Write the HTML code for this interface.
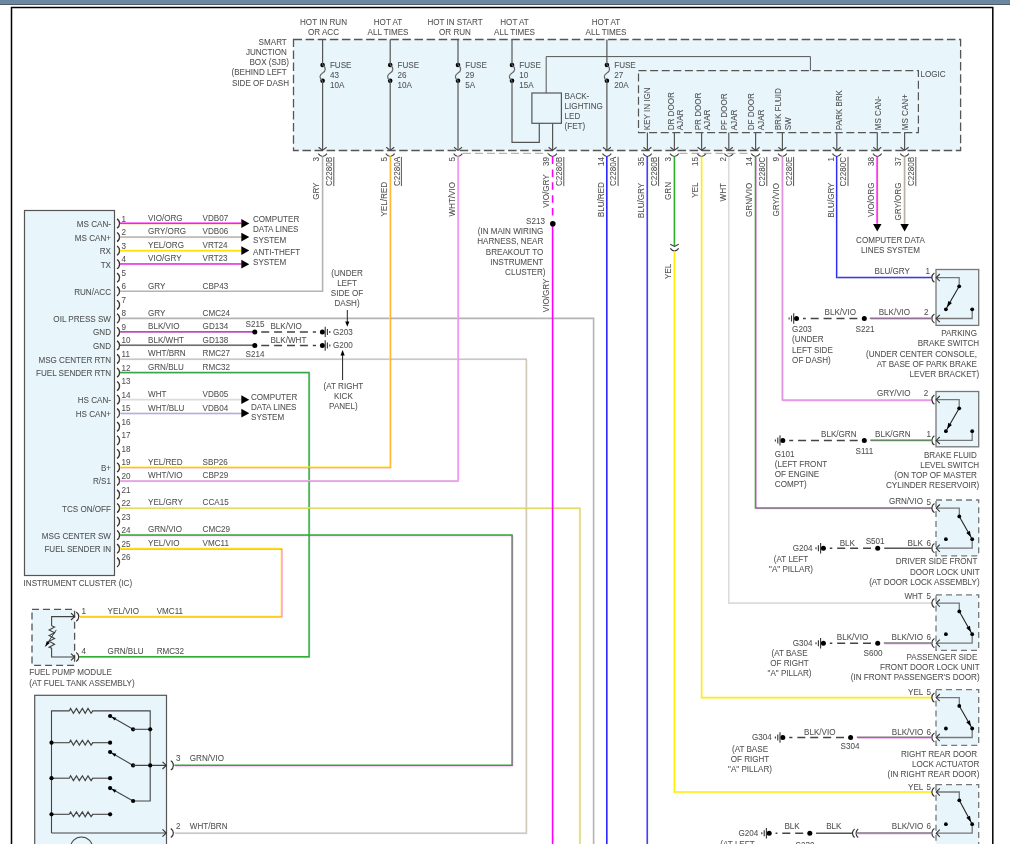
<!DOCTYPE html>
<html><head><meta charset="utf-8"><style>
html,body{margin:0;padding:0;background:#fff;width:1010px;height:844px;overflow:hidden}
svg{display:block;will-change:transform}
text{font-family:"Liberation Sans",sans-serif;font-size:8.7px;fill:#505050;stroke:#505050;stroke-width:0.06px}
</style></head><body>
<svg width="1010" height="844" viewBox="0 0 1010 844">
<rect x="0" y="0" width="1010" height="3.8" fill="#6a86a2" stroke="none" stroke-width="1"/>
<rect x="0" y="3.8" width="1010" height="1" fill="#223044" stroke="none" stroke-width="1"/>
<rect x="11.5" y="7.5" width="981.3" height="900" fill="none" stroke="#000" stroke-width="1.5"/>
<rect x="293.5" y="39.5" width="667.1" height="111" fill="#e8f6fc" stroke="#555" stroke-width="1.3" stroke-dasharray="8.5,3.6"/>
<rect x="638.5" y="70.6" width="279.9" height="62" fill="none" stroke="#555" stroke-width="1.2" stroke-dasharray="8,3.6"/>
<polyline points="546.2,93 546.2,56.6 810.4,56.6 810.4,70.6" fill="none" stroke="#555" stroke-width="1" stroke-linejoin="miter"/>
<text transform="translate(289,44.7) scale(0.93,1)" text-anchor="end">SMART </text>
<text transform="translate(289,54.9) scale(0.93,1)" text-anchor="end">JUNCTION </text>
<text transform="translate(289,65.1) scale(0.93,1)" text-anchor="end">BOX (SJB)</text>
<text transform="translate(289,75.3) scale(0.93,1)" text-anchor="end">(BEHIND LEFT </text>
<text transform="translate(289,85.5) scale(0.93,1)" text-anchor="end">SIDE OF DASH</text>
<text transform="translate(920.5,76.5) scale(0.93,1)">LOGIC</text>
<text transform="translate(323.5,24.8) scale(0.93,1)" text-anchor="middle">HOT IN RUN</text>
<text transform="translate(323.5,35) scale(0.93,1)" text-anchor="middle">OR ACC</text>
<text transform="translate(388,24.8) scale(0.93,1)" text-anchor="middle">HOT AT</text>
<text transform="translate(388,35) scale(0.93,1)" text-anchor="middle">ALL TIMES</text>
<text transform="translate(455,24.8) scale(0.93,1)" text-anchor="middle">HOT IN START</text>
<text transform="translate(455,35) scale(0.93,1)" text-anchor="middle">OR RUN</text>
<text transform="translate(514.5,24.8) scale(0.93,1)" text-anchor="middle">HOT AT</text>
<text transform="translate(514.5,35) scale(0.93,1)" text-anchor="middle">ALL TIMES</text>
<text transform="translate(606,24.8) scale(0.93,1)" text-anchor="middle">HOT AT</text>
<text transform="translate(606,35) scale(0.93,1)" text-anchor="middle">ALL TIMES</text>
<circle cx="322.6" cy="65" r="2.3" fill="#000"/>
<circle cx="322.6" cy="80.8" r="2.3" fill="#000"/>
<path d="M322.6,65 C326.2,67.5 326,71 322.6,73 C319.2,75 319,78.5 322.6,80.8" fill="none" stroke="#666" stroke-width="1.2"/>
<text transform="translate(329.9,67.5) scale(0.93,1)">FUSE</text>
<text transform="translate(329.9,77.6) scale(0.93,1)">43</text>
<text transform="translate(329.9,87.7) scale(0.93,1)">10A</text>
<line x1="322.6" y1="39.5" x2="322.6" y2="65" stroke="#555" stroke-width="1.2" stroke-linecap="butt"/>
<circle cx="390.2" cy="65" r="2.3" fill="#000"/>
<circle cx="390.2" cy="80.8" r="2.3" fill="#000"/>
<path d="M390.2,65 C393.8,67.5 393.6,71 390.2,73 C386.8,75 386.6,78.5 390.2,80.8" fill="none" stroke="#666" stroke-width="1.2"/>
<text transform="translate(397.5,67.5) scale(0.93,1)">FUSE</text>
<text transform="translate(397.5,77.6) scale(0.93,1)">26</text>
<text transform="translate(397.5,87.7) scale(0.93,1)">10A</text>
<line x1="390.2" y1="39.5" x2="390.2" y2="65" stroke="#555" stroke-width="1.2" stroke-linecap="butt"/>
<circle cx="458" cy="65" r="2.3" fill="#000"/>
<circle cx="458" cy="80.8" r="2.3" fill="#000"/>
<path d="M458,65 C461.6,67.5 461.4,71 458,73 C454.6,75 454.4,78.5 458,80.8" fill="none" stroke="#666" stroke-width="1.2"/>
<text transform="translate(465.3,67.5) scale(0.93,1)">FUSE</text>
<text transform="translate(465.3,77.6) scale(0.93,1)">29</text>
<text transform="translate(465.3,87.7) scale(0.93,1)">5A</text>
<line x1="458" y1="39.5" x2="458" y2="65" stroke="#555" stroke-width="1.2" stroke-linecap="butt"/>
<circle cx="512" cy="65" r="2.3" fill="#000"/>
<circle cx="512" cy="80.8" r="2.3" fill="#000"/>
<path d="M512,65 C515.6,67.5 515.4,71 512,73 C508.6,75 508.4,78.5 512,80.8" fill="none" stroke="#666" stroke-width="1.2"/>
<text transform="translate(519.3,67.5) scale(0.93,1)">FUSE</text>
<text transform="translate(519.3,77.6) scale(0.93,1)">10</text>
<text transform="translate(519.3,87.7) scale(0.93,1)">15A</text>
<line x1="512" y1="39.5" x2="512" y2="65" stroke="#555" stroke-width="1.2" stroke-linecap="butt"/>
<circle cx="606.9" cy="65" r="2.3" fill="#000"/>
<circle cx="606.9" cy="80.8" r="2.3" fill="#000"/>
<path d="M606.9,65 C610.5,67.5 610.3,71 606.9,73 C603.5,75 603.3,78.5 606.9,80.8" fill="none" stroke="#666" stroke-width="1.2"/>
<text transform="translate(614.2,67.5) scale(0.93,1)">FUSE</text>
<text transform="translate(614.2,77.6) scale(0.93,1)">27</text>
<text transform="translate(614.2,87.7) scale(0.93,1)">20A</text>
<line x1="606.9" y1="39.5" x2="606.9" y2="65" stroke="#555" stroke-width="1.2" stroke-linecap="butt"/>
<line x1="322.6" y1="80.8" x2="322.6" y2="150.4" stroke="#555" stroke-width="1.2" stroke-linecap="butt"/>
<line x1="390.2" y1="80.8" x2="390.2" y2="150.4" stroke="#555" stroke-width="1.2" stroke-linecap="butt"/>
<line x1="458" y1="80.8" x2="458" y2="150.4" stroke="#555" stroke-width="1.2" stroke-linecap="butt"/>
<line x1="606.9" y1="80.8" x2="606.9" y2="150.4" stroke="#555" stroke-width="1.2" stroke-linecap="butt"/>
<polyline points="512,80.8 512,142.4 539.3,142.4 539.3,123.3" fill="none" stroke="#555" stroke-width="1.2" stroke-linejoin="miter"/>
<rect x="531.9" y="93" width="29.5" height="30.3" fill="none" stroke="#555" stroke-width="1.2"/>
<text transform="translate(564.6,98.7) scale(0.93,1)">BACK-</text>
<text transform="translate(564.6,108.8) scale(0.93,1)">LIGHTING</text>
<text transform="translate(564.6,118.9) scale(0.93,1)">LED</text>
<text transform="translate(564.6,129) scale(0.93,1)">(FET)</text>
<line x1="552.6" y1="123.3" x2="552.6" y2="150.4" stroke="#555" stroke-width="1.2" stroke-linecap="butt"/>
<line x1="647.4" y1="132.6" x2="647.4" y2="150.4" stroke="#555" stroke-width="1.2" stroke-linecap="butt"/>
<line x1="674.4" y1="132.6" x2="674.4" y2="150.4" stroke="#555" stroke-width="1.2" stroke-linecap="butt"/>
<line x1="701.6" y1="132.6" x2="701.6" y2="150.4" stroke="#555" stroke-width="1.2" stroke-linecap="butt"/>
<line x1="728.8" y1="132.6" x2="728.8" y2="150.4" stroke="#555" stroke-width="1.2" stroke-linecap="butt"/>
<line x1="755.6" y1="132.6" x2="755.6" y2="150.4" stroke="#555" stroke-width="1.2" stroke-linecap="butt"/>
<line x1="782.4" y1="132.6" x2="782.4" y2="150.4" stroke="#555" stroke-width="1.2" stroke-linecap="butt"/>
<line x1="836.8" y1="132.6" x2="836.8" y2="150.4" stroke="#555" stroke-width="1.2" stroke-linecap="butt"/>
<line x1="877.3" y1="132.6" x2="877.3" y2="150.4" stroke="#555" stroke-width="1.2" stroke-linecap="butt"/>
<line x1="904.6" y1="132.6" x2="904.6" y2="150.4" stroke="#555" stroke-width="1.2" stroke-linecap="butt"/>
<text transform="translate(650.2,130.3) rotate(-90) scale(0.93,1)">KEY IN IGN</text>
<text transform="translate(673.6,130.3) rotate(-90) scale(0.93,1)">DR DOOR</text>
<text transform="translate(683.4,130.3) rotate(-90) scale(0.93,1)">AJAR</text>
<text transform="translate(700.8,130.3) rotate(-90) scale(0.93,1)">PR DOOR</text>
<text transform="translate(710.2,130.3) rotate(-90) scale(0.93,1)">AJAR</text>
<text transform="translate(727.3,130.3) rotate(-90) scale(0.93,1)">PF DOOR</text>
<text transform="translate(737.3,130.3) rotate(-90) scale(0.93,1)">AJAR</text>
<text transform="translate(754.2,130.3) rotate(-90) scale(0.93,1)">DF DOOR</text>
<text transform="translate(764.2,130.3) rotate(-90) scale(0.93,1)">AJAR</text>
<text transform="translate(781.2,130.3) rotate(-90) scale(0.93,1)">BRK FLUID</text>
<text transform="translate(791.4,130.3) rotate(-90) scale(0.93,1)">SW</text>
<text transform="translate(841.8,130.3) rotate(-90) scale(0.93,1)">PARK BRK</text>
<text transform="translate(881.2,130.3) rotate(-90) scale(0.93,1)">MS CAN-</text>
<text transform="translate(908,130.3) rotate(-90) scale(0.93,1)">MS CAN+</text>
<polyline points="318.6,147.2 322.6,150.4 326.6,147.2" fill="none" stroke="#444" stroke-width="1.1" stroke-linejoin="miter"/>
<path d="M318.2,153.6 Q322.6,159.4 327,153.6" fill="none" stroke="#444" stroke-width="1.1"/>
<polyline points="386.2,147.2 390.2,150.4 394.2,147.2" fill="none" stroke="#444" stroke-width="1.1" stroke-linejoin="miter"/>
<path d="M385.8,153.6 Q390.2,159.4 394.6,153.6" fill="none" stroke="#444" stroke-width="1.1"/>
<polyline points="454,147.2 458,150.4 462,147.2" fill="none" stroke="#444" stroke-width="1.1" stroke-linejoin="miter"/>
<path d="M453.6,153.6 Q458,159.4 462.4,153.6" fill="none" stroke="#444" stroke-width="1.1"/>
<polyline points="548.6,147.2 552.6,150.4 556.6,147.2" fill="none" stroke="#444" stroke-width="1.1" stroke-linejoin="miter"/>
<path d="M548.2,153.6 Q552.6,159.4 557,153.6" fill="none" stroke="#444" stroke-width="1.1"/>
<polyline points="602.9,147.2 606.9,150.4 610.9,147.2" fill="none" stroke="#444" stroke-width="1.1" stroke-linejoin="miter"/>
<path d="M602.5,153.6 Q606.9,159.4 611.3,153.6" fill="none" stroke="#444" stroke-width="1.1"/>
<polyline points="643.4,147.2 647.4,150.4 651.4,147.2" fill="none" stroke="#444" stroke-width="1.1" stroke-linejoin="miter"/>
<path d="M643,153.6 Q647.4,159.4 651.8,153.6" fill="none" stroke="#444" stroke-width="1.1"/>
<polyline points="670.4,147.2 674.4,150.4 678.4,147.2" fill="none" stroke="#444" stroke-width="1.1" stroke-linejoin="miter"/>
<path d="M670,153.6 Q674.4,159.4 678.8,153.6" fill="none" stroke="#444" stroke-width="1.1"/>
<polyline points="697.6,147.2 701.6,150.4 705.6,147.2" fill="none" stroke="#444" stroke-width="1.1" stroke-linejoin="miter"/>
<path d="M697.2,153.6 Q701.6,159.4 706,153.6" fill="none" stroke="#444" stroke-width="1.1"/>
<polyline points="724.8,147.2 728.8,150.4 732.8,147.2" fill="none" stroke="#444" stroke-width="1.1" stroke-linejoin="miter"/>
<path d="M724.4,153.6 Q728.8,159.4 733.2,153.6" fill="none" stroke="#444" stroke-width="1.1"/>
<polyline points="751.6,147.2 755.6,150.4 759.6,147.2" fill="none" stroke="#444" stroke-width="1.1" stroke-linejoin="miter"/>
<path d="M751.2,153.6 Q755.6,159.4 760,153.6" fill="none" stroke="#444" stroke-width="1.1"/>
<polyline points="778.4,147.2 782.4,150.4 786.4,147.2" fill="none" stroke="#444" stroke-width="1.1" stroke-linejoin="miter"/>
<path d="M778,153.6 Q782.4,159.4 786.8,153.6" fill="none" stroke="#444" stroke-width="1.1"/>
<polyline points="832.8,147.2 836.8,150.4 840.8,147.2" fill="none" stroke="#444" stroke-width="1.1" stroke-linejoin="miter"/>
<path d="M832.4,153.6 Q836.8,159.4 841.2,153.6" fill="none" stroke="#444" stroke-width="1.1"/>
<polyline points="873.3,147.2 877.3,150.4 881.3,147.2" fill="none" stroke="#444" stroke-width="1.1" stroke-linejoin="miter"/>
<path d="M872.9,153.6 Q877.3,159.4 881.7,153.6" fill="none" stroke="#444" stroke-width="1.1"/>
<polyline points="900.6,147.2 904.6,150.4 908.6,147.2" fill="none" stroke="#444" stroke-width="1.1" stroke-linejoin="miter"/>
<path d="M900.2,153.6 Q904.6,159.4 909,153.6" fill="none" stroke="#444" stroke-width="1.1"/>
<line x1="463" y1="153.3" x2="548" y2="153.3" stroke="#999" stroke-width="0.9" stroke-linecap="butt" stroke-dasharray="8,4"/>
<line x1="679.5" y1="153.3" x2="751" y2="153.3" stroke="#999" stroke-width="0.9" stroke-linecap="butt" stroke-dasharray="8,4"/>
<text transform="translate(319.3,182.5) rotate(-90) scale(0.93,1)" text-anchor="end">GRY</text>
<text transform="translate(319.3,156.9) rotate(-90) scale(0.93,1)" text-anchor="end">3</text>
<text transform="translate(332,156.9) rotate(-90) scale(0.93,1)" text-anchor="end">C2280B</text>
<line x1="333.8" y1="156.9" x2="333.8" y2="186.1" stroke="#555" stroke-width="1" stroke-linecap="butt"/>
<text transform="translate(386.9,182) rotate(-90) scale(0.93,1)" text-anchor="end">YEL/RED</text>
<text transform="translate(386.9,156.9) rotate(-90) scale(0.93,1)" text-anchor="end">5</text>
<text transform="translate(399.6,156.9) rotate(-90) scale(0.93,1)" text-anchor="end">C2280A</text>
<line x1="401.4" y1="156.9" x2="401.4" y2="186.1" stroke="#555" stroke-width="1" stroke-linecap="butt"/>
<text transform="translate(454.7,182) rotate(-90) scale(0.93,1)" text-anchor="end">WHT/VIO</text>
<text transform="translate(454.7,156.9) rotate(-90) scale(0.93,1)" text-anchor="end">5</text>
<text transform="translate(549.3,174.3) rotate(-90) scale(0.93,1)" text-anchor="end">VIO/GRY</text>
<text transform="translate(549.3,156.9) rotate(-90) scale(0.93,1)" text-anchor="end">39</text>
<text transform="translate(562,156.9) rotate(-90) scale(0.93,1)" text-anchor="end">C2280B</text>
<line x1="563.8" y1="156.9" x2="563.8" y2="186.1" stroke="#555" stroke-width="1" stroke-linecap="butt"/>
<text transform="translate(603.6,182.2) rotate(-90) scale(0.93,1)" text-anchor="end">BLU/RED</text>
<text transform="translate(603.6,156.9) rotate(-90) scale(0.93,1)" text-anchor="end">14</text>
<text transform="translate(616.3,156.9) rotate(-90) scale(0.93,1)" text-anchor="end">C2280A</text>
<line x1="618.1" y1="156.9" x2="618.1" y2="186.1" stroke="#555" stroke-width="1" stroke-linecap="butt"/>
<text transform="translate(644.1,182.8) rotate(-90) scale(0.93,1)" text-anchor="end">BLU/GRY</text>
<text transform="translate(644.1,156.9) rotate(-90) scale(0.93,1)" text-anchor="end">35</text>
<text transform="translate(656.8,156.9) rotate(-90) scale(0.93,1)" text-anchor="end">C2280B</text>
<line x1="658.6" y1="156.9" x2="658.6" y2="186.1" stroke="#555" stroke-width="1" stroke-linecap="butt"/>
<text transform="translate(671.1,182) rotate(-90) scale(0.93,1)" text-anchor="end">GRN</text>
<text transform="translate(671.1,156.9) rotate(-90) scale(0.93,1)" text-anchor="end">3</text>
<text transform="translate(698.3,182.5) rotate(-90) scale(0.93,1)" text-anchor="end">YEL</text>
<text transform="translate(698.3,156.9) rotate(-90) scale(0.93,1)" text-anchor="end">15</text>
<text transform="translate(725.5,183) rotate(-90) scale(0.93,1)" text-anchor="end">WHT</text>
<text transform="translate(725.5,156.9) rotate(-90) scale(0.93,1)" text-anchor="end">2</text>
<text transform="translate(752.3,182.8) rotate(-90) scale(0.93,1)" text-anchor="end">GRN/VIO</text>
<text transform="translate(752.3,156.9) rotate(-90) scale(0.93,1)" text-anchor="end">14</text>
<text transform="translate(765,156.9) rotate(-90) scale(0.93,1)" text-anchor="end">C2280C</text>
<line x1="766.8" y1="156.9" x2="766.8" y2="186.1" stroke="#555" stroke-width="1" stroke-linecap="butt"/>
<text transform="translate(779.1,183) rotate(-90) scale(0.93,1)" text-anchor="end">GRY/VIO</text>
<text transform="translate(779.1,156.9) rotate(-90) scale(0.93,1)" text-anchor="end">9</text>
<text transform="translate(791.8,156.9) rotate(-90) scale(0.93,1)" text-anchor="end">C2280E</text>
<line x1="793.6" y1="156.9" x2="793.6" y2="186.1" stroke="#555" stroke-width="1" stroke-linecap="butt"/>
<text transform="translate(833.5,182.5) rotate(-90) scale(0.93,1)" text-anchor="end">BLU/GRY</text>
<text transform="translate(833.5,156.9) rotate(-90) scale(0.93,1)" text-anchor="end">1</text>
<text transform="translate(846.2,156.9) rotate(-90) scale(0.93,1)" text-anchor="end">C2280C</text>
<line x1="848" y1="156.9" x2="848" y2="186.1" stroke="#555" stroke-width="1" stroke-linecap="butt"/>
<text transform="translate(874,182.5) rotate(-90) scale(0.93,1)" text-anchor="end">VIO/ORG</text>
<text transform="translate(874,156.9) rotate(-90) scale(0.93,1)" text-anchor="end">38</text>
<text transform="translate(901.3,182.5) rotate(-90) scale(0.93,1)" text-anchor="end">GRY/ORG</text>
<text transform="translate(901.3,156.9) rotate(-90) scale(0.93,1)" text-anchor="end">37</text>
<text transform="translate(914,156.9) rotate(-90) scale(0.93,1)" text-anchor="end">C2280B</text>
<line x1="915.8" y1="156.9" x2="915.8" y2="186.1" stroke="#555" stroke-width="1" stroke-linecap="butt"/>
<text transform="translate(549.3,278.6) rotate(-90) scale(0.93,1)" text-anchor="end">VIO/GRY</text>
<text transform="translate(671.3,263.8) rotate(-90) scale(0.93,1)" text-anchor="end">YEL</text>
<rect x="24.5" y="210.5" width="90" height="365" fill="#e8f6fc" stroke="#555" stroke-width="1.2"/>
<text transform="translate(23.6,585.5) scale(0.93,1)">INSTRUMENT CLUSTER (IC)</text>
<path d="M117,218.9 C120.4,220.9 120.4,226.1 117,228.1" fill="none" stroke="#333" stroke-width="1.3"/>
<text transform="translate(121.5,221.5) scale(0.93,1)">1</text>
<text transform="translate(111,227) scale(0.93,1)" text-anchor="end">MS CAN-</text>
<path d="M117,232.45 C120.4,234.45 120.4,239.65 117,241.65" fill="none" stroke="#333" stroke-width="1.3"/>
<text transform="translate(121.5,235.05) scale(0.93,1)">2</text>
<text transform="translate(111,240.55) scale(0.93,1)" text-anchor="end">MS CAN+</text>
<path d="M117,246 C120.4,248 120.4,253.2 117,255.2" fill="none" stroke="#333" stroke-width="1.3"/>
<text transform="translate(121.5,248.6) scale(0.93,1)">3</text>
<text transform="translate(111,254.1) scale(0.93,1)" text-anchor="end">RX</text>
<path d="M117,259.55 C120.4,261.55 120.4,266.75 117,268.75" fill="none" stroke="#333" stroke-width="1.3"/>
<text transform="translate(121.5,262.15) scale(0.93,1)">4</text>
<text transform="translate(111,267.65) scale(0.93,1)" text-anchor="end">TX</text>
<path d="M117,273.1 C120.4,275.1 120.4,280.3 117,282.3" fill="none" stroke="#333" stroke-width="1.3"/>
<text transform="translate(121.5,275.7) scale(0.93,1)">5</text>
<path d="M117,286.65 C120.4,288.65 120.4,293.85 117,295.85" fill="none" stroke="#333" stroke-width="1.3"/>
<text transform="translate(121.5,289.25) scale(0.93,1)">6</text>
<text transform="translate(111,294.75) scale(0.93,1)" text-anchor="end">RUN/ACC</text>
<path d="M117,300.2 C120.4,302.2 120.4,307.4 117,309.4" fill="none" stroke="#333" stroke-width="1.3"/>
<text transform="translate(121.5,302.8) scale(0.93,1)">7</text>
<path d="M117,313.75 C120.4,315.75 120.4,320.95 117,322.95" fill="none" stroke="#333" stroke-width="1.3"/>
<text transform="translate(121.5,316.35) scale(0.93,1)">8</text>
<text transform="translate(111,321.85) scale(0.93,1)" text-anchor="end">OIL PRESS SW</text>
<path d="M117,327.3 C120.4,329.3 120.4,334.5 117,336.5" fill="none" stroke="#333" stroke-width="1.3"/>
<text transform="translate(121.5,329.9) scale(0.93,1)">9</text>
<text transform="translate(111,335.4) scale(0.93,1)" text-anchor="end">GND</text>
<path d="M117,340.85 C120.4,342.85 120.4,348.05 117,350.05" fill="none" stroke="#333" stroke-width="1.3"/>
<text transform="translate(121.5,343.45) scale(0.93,1)">10</text>
<text transform="translate(111,348.95) scale(0.93,1)" text-anchor="end">GND</text>
<path d="M117,354.4 C120.4,356.4 120.4,361.6 117,363.6" fill="none" stroke="#333" stroke-width="1.3"/>
<text transform="translate(121.5,357) scale(0.93,1)">11</text>
<text transform="translate(111,362.5) scale(0.93,1)" text-anchor="end">MSG CENTER RTN</text>
<path d="M117,367.95 C120.4,369.95 120.4,375.15 117,377.15" fill="none" stroke="#333" stroke-width="1.3"/>
<text transform="translate(121.5,370.55) scale(0.93,1)">12</text>
<text transform="translate(111,376.05) scale(0.93,1)" text-anchor="end">FUEL SENDER RTN</text>
<path d="M117,381.5 C120.4,383.5 120.4,388.7 117,390.7" fill="none" stroke="#333" stroke-width="1.3"/>
<text transform="translate(121.5,384.1) scale(0.93,1)">13</text>
<path d="M117,395.05 C120.4,397.05 120.4,402.25 117,404.25" fill="none" stroke="#333" stroke-width="1.3"/>
<text transform="translate(121.5,397.65) scale(0.93,1)">14</text>
<text transform="translate(111,403.15) scale(0.93,1)" text-anchor="end">HS CAN-</text>
<path d="M117,408.6 C120.4,410.6 120.4,415.8 117,417.8" fill="none" stroke="#333" stroke-width="1.3"/>
<text transform="translate(121.5,411.2) scale(0.93,1)">15</text>
<text transform="translate(111,416.7) scale(0.93,1)" text-anchor="end">HS CAN+</text>
<path d="M117,422.15 C120.4,424.15 120.4,429.35 117,431.35" fill="none" stroke="#333" stroke-width="1.3"/>
<text transform="translate(121.5,424.75) scale(0.93,1)">16</text>
<path d="M117,435.7 C120.4,437.7 120.4,442.9 117,444.9" fill="none" stroke="#333" stroke-width="1.3"/>
<text transform="translate(121.5,438.3) scale(0.93,1)">17</text>
<path d="M117,449.25 C120.4,451.25 120.4,456.45 117,458.45" fill="none" stroke="#333" stroke-width="1.3"/>
<text transform="translate(121.5,451.85) scale(0.93,1)">18</text>
<path d="M117,462.8 C120.4,464.8 120.4,470 117,472" fill="none" stroke="#333" stroke-width="1.3"/>
<text transform="translate(121.5,465.4) scale(0.93,1)">19</text>
<text transform="translate(111,470.9) scale(0.93,1)" text-anchor="end">B+</text>
<path d="M117,476.35 C120.4,478.35 120.4,483.55 117,485.55" fill="none" stroke="#333" stroke-width="1.3"/>
<text transform="translate(121.5,478.95) scale(0.93,1)">20</text>
<text transform="translate(111,484.45) scale(0.93,1)" text-anchor="end">R/S1</text>
<path d="M117,489.9 C120.4,491.9 120.4,497.1 117,499.1" fill="none" stroke="#333" stroke-width="1.3"/>
<text transform="translate(121.5,492.5) scale(0.93,1)">21</text>
<path d="M117,503.45 C120.4,505.45 120.4,510.65 117,512.65" fill="none" stroke="#333" stroke-width="1.3"/>
<text transform="translate(121.5,506.05) scale(0.93,1)">22</text>
<text transform="translate(111,511.55) scale(0.93,1)" text-anchor="end">TCS ON/OFF</text>
<path d="M117,517 C120.4,519 120.4,524.2 117,526.2" fill="none" stroke="#333" stroke-width="1.3"/>
<text transform="translate(121.5,519.6) scale(0.93,1)">23</text>
<path d="M117,530.55 C120.4,532.55 120.4,537.75 117,539.75" fill="none" stroke="#333" stroke-width="1.3"/>
<text transform="translate(121.5,533.15) scale(0.93,1)">24</text>
<text transform="translate(111,538.65) scale(0.93,1)" text-anchor="end">MSG CENTER SW</text>
<path d="M117,544.1 C120.4,546.1 120.4,551.3 117,553.3" fill="none" stroke="#333" stroke-width="1.3"/>
<text transform="translate(121.5,546.7) scale(0.93,1)">25</text>
<text transform="translate(111,552.2) scale(0.93,1)" text-anchor="end">FUEL SENDER IN</text>
<path d="M117,557.65 C120.4,559.65 120.4,564.85 117,566.85" fill="none" stroke="#333" stroke-width="1.3"/>
<text transform="translate(121.5,560.25) scale(0.93,1)">26</text>
<text transform="translate(148,220.8) scale(0.93,1)">VIO/ORG</text>
<text transform="translate(202.6,220.8) scale(0.93,1)">VDB07</text>
<text transform="translate(148,234.35) scale(0.93,1)">GRY/ORG</text>
<text transform="translate(202.6,234.35) scale(0.93,1)">VDB06</text>
<text transform="translate(148,247.9) scale(0.93,1)">YEL/ORG</text>
<text transform="translate(202.6,247.9) scale(0.93,1)">VRT24</text>
<text transform="translate(148,261.45) scale(0.93,1)">VIO/GRY</text>
<text transform="translate(202.6,261.45) scale(0.93,1)">VRT23</text>
<text transform="translate(148,288.55) scale(0.93,1)">GRY</text>
<text transform="translate(202.6,288.55) scale(0.93,1)">CBP43</text>
<text transform="translate(148,315.65) scale(0.93,1)">GRY</text>
<text transform="translate(202.6,315.65) scale(0.93,1)">CMC24</text>
<text transform="translate(148,329.2) scale(0.93,1)">BLK/VIO</text>
<text transform="translate(202.6,329.2) scale(0.93,1)">GD134</text>
<text transform="translate(148,342.75) scale(0.93,1)">BLK/WHT</text>
<text transform="translate(202.6,342.75) scale(0.93,1)">GD138</text>
<text transform="translate(148,356.3) scale(0.93,1)">WHT/BRN</text>
<text transform="translate(202.6,356.3) scale(0.93,1)">RMC27</text>
<text transform="translate(148,369.85) scale(0.93,1)">GRN/BLU</text>
<text transform="translate(202.6,369.85) scale(0.93,1)">RMC32</text>
<text transform="translate(148,396.95) scale(0.93,1)">WHT</text>
<text transform="translate(202.6,396.95) scale(0.93,1)">VDB05</text>
<text transform="translate(148,410.5) scale(0.93,1)">WHT/BLU</text>
<text transform="translate(202.6,410.5) scale(0.93,1)">VDB04</text>
<text transform="translate(148,464.7) scale(0.93,1)">YEL/RED</text>
<text transform="translate(202.6,464.7) scale(0.93,1)">SBP26</text>
<text transform="translate(148,478.25) scale(0.93,1)">WHT/VIO</text>
<text transform="translate(202.6,478.25) scale(0.93,1)">CBP29</text>
<text transform="translate(148,505.35) scale(0.93,1)">YEL/GRY</text>
<text transform="translate(202.6,505.35) scale(0.93,1)">CCA15</text>
<text transform="translate(148,532.45) scale(0.93,1)">GRN/VIO</text>
<text transform="translate(202.6,532.45) scale(0.93,1)">CMC29</text>
<text transform="translate(148,546) scale(0.93,1)">YEL/VIO</text>
<text transform="translate(202.6,546) scale(0.93,1)">VMC11</text>
<polyline points="119.85,223.35 241.35,223.35" fill="none" stroke="#ff00ff" stroke-width="1.5" stroke-linejoin="miter"/>
<g opacity="0.6">
<polyline points="120.6,224.1 242.1,224.1" fill="none" stroke="#ffa030" stroke-width="0.7" stroke-linejoin="miter"/>
</g>
<polygon points="241.3,219.1 249.3,223.5 241.3,227.9" fill="#000"/>
<polyline points="119.85,236.9 241.35,236.9" fill="none" stroke="#b4b4b4" stroke-width="1.5" stroke-linejoin="miter"/>
<g opacity="0.6">
<polyline points="120.6,237.65 242.1,237.65" fill="none" stroke="#ffa030" stroke-width="0.7" stroke-linejoin="miter"/>
</g>
<polygon points="241.3,232.65 249.3,237.05 241.3,241.45" fill="#000"/>
<polyline points="119.85,250.45 241.35,250.45" fill="none" stroke="#ffee00" stroke-width="1.5" stroke-linejoin="miter"/>
<g opacity="0.6">
<polyline points="120.6,251.2 242.1,251.2" fill="none" stroke="#ffa030" stroke-width="0.7" stroke-linejoin="miter"/>
</g>
<polygon points="241.3,246.2 249.3,250.6 241.3,255" fill="#000"/>
<polyline points="119.85,264 241.35,264" fill="none" stroke="#ff00ff" stroke-width="1.5" stroke-linejoin="miter"/>
<g opacity="0.6">
<polyline points="120.6,264.75 242.1,264.75" fill="none" stroke="#b4b4b4" stroke-width="0.7" stroke-linejoin="miter"/>
</g>
<polygon points="241.3,259.75 249.3,264.15 241.3,268.55" fill="#000"/>
<polyline points="120,399.65 241.5,399.65" fill="none" stroke="#dcdcdc" stroke-width="1.6" stroke-linejoin="miter"/>
<polygon points="241.3,395.25 249.3,399.65 241.3,404.05" fill="#000"/>
<polyline points="119.85,413.05 241.35,413.05" fill="none" stroke="#dcdcdc" stroke-width="1.5" stroke-linejoin="miter"/>
<g opacity="0.6">
<polyline points="120.6,413.8 242.1,413.8" fill="none" stroke="#2828ff" stroke-width="0.7" stroke-linejoin="miter"/>
</g>
<polygon points="241.3,408.8 249.3,413.2 241.3,417.6" fill="#000"/>
<text transform="translate(253,222.2) scale(0.93,1)">COMPUTER</text>
<text transform="translate(253,232.4) scale(0.93,1)">DATA LINES</text>
<text transform="translate(253,242.6) scale(0.93,1)">SYSTEM</text>
<text transform="translate(253,254.8) scale(0.93,1)">ANTI-THEFT</text>
<text transform="translate(253,264.8) scale(0.93,1)">SYSTEM</text>
<text transform="translate(251,399.8) scale(0.93,1)">COMPUTER</text>
<text transform="translate(251,410.1) scale(0.93,1)">DATA LINES</text>
<text transform="translate(251,420.4) scale(0.93,1)">SYSTEM</text>
<polyline points="120,291.25 322.6,291.25 322.6,156.5" fill="none" stroke="#b4b4b4" stroke-width="1.6" stroke-linejoin="miter"/>
<polyline points="120,318.35 593.6,318.35 593.6,850" fill="none" stroke="#b4b4b4" stroke-width="1.6" stroke-linejoin="miter"/>
<polyline points="119.85,331.75 254.65,331.75" fill="none" stroke="#7a7a7a" stroke-width="1.5" stroke-linejoin="miter"/>
<g opacity="0.9">
<polyline points="120.6,332.5 255.4,332.5" fill="none" stroke="#e050e0" stroke-width="0.7" stroke-linejoin="miter"/>
</g>
<polyline points="119.85,345.3 254.65,345.3" fill="none" stroke="#555555" stroke-width="1.5" stroke-linejoin="miter"/>
<g opacity="0.6">
<polyline points="120.6,346.05 255.4,346.05" fill="none" stroke="#dcdcdc" stroke-width="0.7" stroke-linejoin="miter"/>
</g>
<polyline points="119.85,358.85 526.05,358.85 526.05,832.85 174.35,832.85" fill="none" stroke="#dcdcdc" stroke-width="1.5" stroke-linejoin="miter"/>
<g opacity="0.6">
<polyline points="120.6,359.6 526.8,359.6 526.8,833.6 175.1,833.6" fill="none" stroke="#a88a5a" stroke-width="0.7" stroke-linejoin="miter"/>
</g>
<polyline points="119.85,372.4 309.05,372.4 309.05,656.65 79.05,656.65" fill="none" stroke="#2cb02c" stroke-width="1.5" stroke-linejoin="miter"/>
<g opacity="0.6">
<polyline points="120.6,373.15 309.8,373.15 309.8,657.4 79.8,657.4" fill="none" stroke="#7070ff" stroke-width="0.7" stroke-linejoin="miter"/>
</g>
<polyline points="119.85,467.25 390.05,467.25 390.05,156.35" fill="none" stroke="#ffee00" stroke-width="1.5" stroke-linejoin="miter"/>
<g opacity="0.6">
<polyline points="120.6,468 390.8,468 390.8,157.1" fill="none" stroke="#ff3030" stroke-width="0.7" stroke-linejoin="miter"/>
</g>
<polyline points="119.85,480.8 457.85,480.8 457.85,156.35" fill="none" stroke="#e8b0e8" stroke-width="1.5" stroke-linejoin="miter"/>
<g opacity="0.8">
<polyline points="120.6,481.55 458.6,481.55 458.6,157.1" fill="none" stroke="#ff60ff" stroke-width="0.7" stroke-linejoin="miter"/>
</g>
<polyline points="119.85,507.9 579.65,507.9 579.65,849.85" fill="none" stroke="#ffee00" stroke-width="1.5" stroke-linejoin="miter"/>
<g opacity="0.6">
<polyline points="120.6,508.65 580.4,508.65 580.4,850.6" fill="none" stroke="#b4b4b4" stroke-width="0.7" stroke-linejoin="miter"/>
</g>
<polyline points="119.85,535 512.05,535 512.05,765.25 174.35,765.25" fill="none" stroke="#2cb02c" stroke-width="1.5" stroke-linejoin="miter"/>
<g opacity="0.6">
<polyline points="120.6,535.75 512.8,535.75 512.8,766 175.1,766" fill="none" stroke="#ff00ff" stroke-width="0.7" stroke-linejoin="miter"/>
</g>
<polyline points="119.85,548.55 281.45,548.55 281.45,616.45 79.05,616.45" fill="none" stroke="#ffee00" stroke-width="1.5" stroke-linejoin="miter"/>
<g opacity="0.6">
<polyline points="120.6,549.3 282.2,549.3 282.2,617.2 79.8,617.2" fill="none" stroke="#ff00ff" stroke-width="0.7" stroke-linejoin="miter"/>
</g>
<circle cx="254.8" cy="331.9" r="2.5" fill="#000"/>
<circle cx="254.8" cy="345.45" r="2.5" fill="#000"/>
<line x1="261.2" y1="331.9" x2="316" y2="331.9" stroke="#444" stroke-width="1.5" stroke-linecap="butt" stroke-dasharray="8,4.9"/>
<line x1="261.2" y1="345.45" x2="316" y2="345.45" stroke="#444" stroke-width="1.5" stroke-linecap="butt" stroke-dasharray="8,4.9"/>
<circle cx="322.4" cy="331.9" r="2.5" fill="#000"/>
<line x1="325.2" y1="326.7" x2="325.2" y2="337.1" stroke="#333" stroke-width="1.1" stroke-linecap="butt"/>
<line x1="327.4" y1="328.9" x2="327.4" y2="334.9" stroke="#333" stroke-width="1.1" stroke-linecap="butt"/>
<line x1="329.8" y1="330.9" x2="329.8" y2="332.9" stroke="#333" stroke-width="1.1" stroke-linecap="butt"/>
<text transform="translate(333,334.5) scale(0.93,1)">G203</text>
<circle cx="322.4" cy="345.45" r="2.5" fill="#000"/>
<line x1="325.2" y1="340.25" x2="325.2" y2="350.65" stroke="#333" stroke-width="1.1" stroke-linecap="butt"/>
<line x1="327.4" y1="342.45" x2="327.4" y2="348.45" stroke="#333" stroke-width="1.1" stroke-linecap="butt"/>
<line x1="329.8" y1="344.45" x2="329.8" y2="346.45" stroke="#333" stroke-width="1.1" stroke-linecap="butt"/>
<text transform="translate(333,348.05) scale(0.93,1)">G200</text>
<text transform="translate(245.6,326.5) scale(0.93,1)">S215</text>
<text transform="translate(245.6,356.7) scale(0.93,1)">S214</text>
<text transform="translate(270.4,329) scale(0.93,1)">BLK/VIO</text>
<text transform="translate(270.4,342.8) scale(0.93,1)">BLK/WHT</text>
<text transform="translate(347,275.6) scale(0.93,1)" text-anchor="middle">(UNDER</text>
<text transform="translate(347,285.63) scale(0.93,1)" text-anchor="middle">LEFT</text>
<text transform="translate(347,295.66) scale(0.93,1)" text-anchor="middle">SIDE OF</text>
<text transform="translate(347,305.69) scale(0.93,1)" text-anchor="middle">DASH)</text>
<line x1="347.3" y1="310" x2="347.3" y2="322" stroke="#222" stroke-width="1" stroke-linecap="butt"/>
<polygon points="345.2,321.5 347.3,326.8 349.4,321.5" fill="#000"/>
<text transform="translate(343.4,389) scale(0.93,1)" text-anchor="middle">(AT RIGHT</text>
<text transform="translate(343.4,399) scale(0.93,1)" text-anchor="middle">KICK</text>
<text transform="translate(343.4,409) scale(0.93,1)" text-anchor="middle">PANEL)</text>
<line x1="342.6" y1="380" x2="342.6" y2="355" stroke="#222" stroke-width="1" stroke-linecap="butt"/>
<polygon points="340.5,355.4 342.6,350.1 344.7,355.4" fill="#000"/>
<polyline points="552.6,156.5 552.6,223.6" fill="none" stroke="#ff00ff" stroke-width="1.6" stroke-linejoin="miter" stroke-dasharray="7.5,5.4"/>
<polyline points="552.6,223.6 552.6,850" fill="none" stroke="#ff00ff" stroke-width="1.6" stroke-linejoin="miter"/>
<circle cx="552.8" cy="223.8" r="2.8" fill="#000"/>
<text transform="translate(545,224.1) scale(0.93,1)" text-anchor="end">S213</text>
<text transform="translate(545.5,234.3) scale(0.93,1)" text-anchor="end">(IN MAIN WIRING </text>
<text transform="translate(545.5,244.47) scale(0.93,1)" text-anchor="end">HARNESS, NEAR </text>
<text transform="translate(545.5,254.64) scale(0.93,1)" text-anchor="end">BREAKOUT TO </text>
<text transform="translate(545.5,264.81) scale(0.93,1)" text-anchor="end">INSTRUMENT </text>
<text transform="translate(545.5,274.98) scale(0.93,1)" text-anchor="end">CLUSTER)</text>
<polyline points="606.75,156.35 606.75,849.85" fill="none" stroke="#2828ff" stroke-width="1.5" stroke-linejoin="miter"/>
<g opacity="0.6">
<polyline points="607.5,157.1 607.5,850.6" fill="none" stroke="#ff3030" stroke-width="0.7" stroke-linejoin="miter"/>
</g>
<polyline points="647.25,156.35 647.25,849.85" fill="none" stroke="#2828ff" stroke-width="1.5" stroke-linejoin="miter"/>
<g opacity="0.6">
<polyline points="648,157.1 648,850.6" fill="none" stroke="#b4b4b4" stroke-width="0.7" stroke-linejoin="miter"/>
</g>
<polyline points="674.4,156.5 674.4,245.8" fill="none" stroke="#2cb02c" stroke-width="1.6" stroke-linejoin="miter"/>
<polyline points="670.3,244.3 674.5,246.4 678.7,244.3" fill="none" stroke="#333" stroke-width="1.1" stroke-linejoin="miter"/>
<path d="M670.3,248.4 Q674.5,253.8 678.7,248.4" fill="none" stroke="#333" stroke-width="1.1"/>
<polyline points="674.4,251 674.4,792 932,792" fill="none" stroke="#ffee00" stroke-width="1.6" stroke-linejoin="miter"/>
<polyline points="701.6,156.5 701.6,697.6 932,697.6" fill="none" stroke="#ffee00" stroke-width="1.6" stroke-linejoin="miter"/>
<polyline points="728.8,156.5 728.8,603.1 932,603.1" fill="none" stroke="#dcdcdc" stroke-width="1.6" stroke-linejoin="miter"/>
<polyline points="755.45,156.35 755.45,507.95 931.85,507.95" fill="none" stroke="#2cb02c" stroke-width="1.5" stroke-linejoin="miter"/>
<g opacity="0.6">
<polyline points="756.2,157.1 756.2,508.7 932.6,508.7" fill="none" stroke="#ff00ff" stroke-width="0.7" stroke-linejoin="miter"/>
</g>
<polyline points="782.25,156.35 782.25,400.05 931.85,400.05" fill="none" stroke="#d0a8d0" stroke-width="1.5" stroke-linejoin="miter"/>
<g opacity="0.8">
<polyline points="783,157.1 783,400.8 932.6,400.8" fill="none" stroke="#ff60ff" stroke-width="0.7" stroke-linejoin="miter"/>
</g>
<polyline points="836.65,156.35 836.65,277.45 931.85,277.45" fill="none" stroke="#2828ff" stroke-width="1.5" stroke-linejoin="miter"/>
<g opacity="0.6">
<polyline points="837.4,157.1 837.4,278.2 932.6,278.2" fill="none" stroke="#b4b4b4" stroke-width="0.7" stroke-linejoin="miter"/>
</g>
<polyline points="877.15,156.35 877.15,223.85" fill="none" stroke="#ff00ff" stroke-width="1.5" stroke-linejoin="miter"/>
<g opacity="0.6">
<polyline points="877.9,157.1 877.9,224.6" fill="none" stroke="#ffa030" stroke-width="0.7" stroke-linejoin="miter"/>
</g>
<polygon points="873.1,224 877.3,231.5 881.5,224" fill="#000"/>
<polyline points="904.45,156.35 904.45,223.85" fill="none" stroke="#b4b4b4" stroke-width="1.5" stroke-linejoin="miter"/>
<g opacity="0.6">
<polyline points="905.2,157.1 905.2,224.6" fill="none" stroke="#ffa030" stroke-width="0.7" stroke-linejoin="miter"/>
</g>
<polygon points="900.4,224 904.6,231.5 908.8,224" fill="#000"/>
<text transform="translate(890.5,243) scale(0.93,1)" text-anchor="middle">COMPUTER DATA</text>
<text transform="translate(890.5,253) scale(0.93,1)" text-anchor="middle">LINES SYSTEM</text>
<rect x="936" y="269.5" width="42.7" height="55.9" fill="#e8f6fc" stroke="#777" stroke-width="1.3"/>
<polyline points="936.5,277.6 959.2,277.6 959.2,286.3" fill="none" stroke="#777" stroke-width="1.3" stroke-linejoin="miter"/>
<polyline points="972.2,309.3 972.2,318.5 936.5,318.5" fill="none" stroke="#777" stroke-width="1.3" stroke-linejoin="miter"/>
<line x1="959.2" y1="286.3" x2="945.9" y2="309.3" stroke="#222" stroke-width="1.1" stroke-linecap="butt"/>
<polygon points="947.1,307.2 948.29,300.96 951.92,303.06" fill="#000"/>
<circle cx="959.2" cy="286.3" r="1.9" fill="#000"/>
<circle cx="945.9" cy="309.3" r="1.9" fill="#000"/>
<circle cx="972.2" cy="309.3" r="1.9" fill="#000"/>
<path d="M934.4,273 C931,275 931,280.2 934.4,282.2" fill="none" stroke="#333" stroke-width="1.2"/>
<polyline points="939.8,274 936.2,277.6 939.8,281.2" fill="none" stroke="#333" stroke-width="1.1" stroke-linejoin="miter"/>
<path d="M934.4,313.9 C931,315.9 931,321.1 934.4,323.1" fill="none" stroke="#333" stroke-width="1.2"/>
<polyline points="939.8,314.9 936.2,318.5 939.8,322.1" fill="none" stroke="#333" stroke-width="1.1" stroke-linejoin="miter"/>
<text transform="translate(874.6,273.7) scale(0.93,1)">BLU/GRY</text>
<text transform="translate(925.6,273.5) scale(0.93,1)">1</text>
<text transform="translate(924,314.5) scale(0.93,1)">2</text>
<text transform="translate(878.7,314.5) scale(0.93,1)">BLK/VIO</text>
<polyline points="869.85,318.35 931.85,318.35" fill="none" stroke="#7a7a7a" stroke-width="1.5" stroke-linejoin="miter"/>
<g opacity="0.9">
<polyline points="870.6,319.1 932.6,319.1" fill="none" stroke="#e050e0" stroke-width="0.7" stroke-linejoin="miter"/>
</g>
<circle cx="864.3" cy="318.5" r="2.5" fill="#000"/>
<line x1="857.4" y1="318.5" x2="803" y2="318.5" stroke="#444" stroke-width="1.5" stroke-linecap="butt" stroke-dasharray="8,4.9"/>
<circle cx="796.5" cy="318.5" r="2.5" fill="#000"/>
<line x1="793.7" y1="313.3" x2="793.7" y2="323.7" stroke="#333" stroke-width="1.1" stroke-linecap="butt"/>
<line x1="791.5" y1="315.5" x2="791.5" y2="321.5" stroke="#333" stroke-width="1.1" stroke-linecap="butt"/>
<line x1="789.1" y1="317.5" x2="789.1" y2="319.5" stroke="#333" stroke-width="1.1" stroke-linecap="butt"/>
<text transform="translate(824.5,314.5) scale(0.93,1)">BLK/VIO</text>
<text transform="translate(855.5,332) scale(0.93,1)">S221</text>
<text transform="translate(792.1,332) scale(0.93,1)">G203</text>
<text transform="translate(792.1,342.4) scale(0.93,1)">(UNDER</text>
<text transform="translate(792.1,352.8) scale(0.93,1)">LEFT SIDE</text>
<text transform="translate(792.1,363.2) scale(0.93,1)">OF DASH)</text>
<text transform="translate(979.2,336) scale(0.93,1)" text-anchor="end">PARKING </text>
<text transform="translate(979.2,346.25) scale(0.93,1)" text-anchor="end">BRAKE SWITCH</text>
<text transform="translate(979.2,356.5) scale(0.93,1)" text-anchor="end">(UNDER CENTER CONSOLE, </text>
<text transform="translate(979.2,366.75) scale(0.93,1)" text-anchor="end">AT BASE OF PARK BRAKE </text>
<text transform="translate(979.2,377) scale(0.93,1)" text-anchor="end">LEVER BRACKET)</text>
<rect x="936" y="391.5" width="42.7" height="55.3" fill="#e8f6fc" stroke="#777" stroke-width="1.3"/>
<polyline points="936.5,399.6 959.2,399.6 959.2,408.3" fill="none" stroke="#777" stroke-width="1.3" stroke-linejoin="miter"/>
<polyline points="972.2,431.2 972.2,440.4 936.5,440.4" fill="none" stroke="#777" stroke-width="1.3" stroke-linejoin="miter"/>
<line x1="959.2" y1="408.3" x2="945.9" y2="431.2" stroke="#222" stroke-width="1.1" stroke-linecap="butt"/>
<polygon points="947.1,429.1 948.3,422.86 951.93,424.97" fill="#000"/>
<circle cx="959.2" cy="408.3" r="1.9" fill="#000"/>
<circle cx="945.9" cy="431.2" r="1.9" fill="#000"/>
<circle cx="972.2" cy="431.2" r="1.9" fill="#000"/>
<path d="M934.4,395 C931,397 931,402.2 934.4,404.2" fill="none" stroke="#333" stroke-width="1.2"/>
<polyline points="939.8,396 936.2,399.6 939.8,403.2" fill="none" stroke="#333" stroke-width="1.1" stroke-linejoin="miter"/>
<path d="M934.4,435.8 C931,437.8 931,443 934.4,445" fill="none" stroke="#333" stroke-width="1.2"/>
<polyline points="939.8,436.8 936.2,440.4 939.8,444" fill="none" stroke="#333" stroke-width="1.1" stroke-linejoin="miter"/>
<text transform="translate(876.9,395.8) scale(0.93,1)">GRY/VIO</text>
<text transform="translate(923.8,395.8) scale(0.93,1)">2</text>
<text transform="translate(926.5,437) scale(0.93,1)">1</text>
<polyline points="870.35,440.25 931.85,440.25" fill="none" stroke="#666666" stroke-width="1.5" stroke-linejoin="miter"/>
<g opacity="0.9">
<polyline points="871.1,441 932.6,441" fill="none" stroke="#60d060" stroke-width="0.7" stroke-linejoin="miter"/>
</g>
<circle cx="864.3" cy="440.4" r="2.5" fill="#000"/>
<line x1="857.7" y1="440.4" x2="789.2" y2="440.4" stroke="#444" stroke-width="1.5" stroke-linecap="butt" stroke-dasharray="8,4.9"/>
<circle cx="782.8" cy="440.4" r="2.5" fill="#000"/>
<line x1="780" y1="435.2" x2="780" y2="445.6" stroke="#333" stroke-width="1.1" stroke-linecap="butt"/>
<line x1="777.8" y1="437.4" x2="777.8" y2="443.4" stroke="#333" stroke-width="1.1" stroke-linecap="butt"/>
<line x1="775.4" y1="439.4" x2="775.4" y2="441.4" stroke="#333" stroke-width="1.1" stroke-linecap="butt"/>
<text transform="translate(821,437) scale(0.93,1)">BLK/GRN</text>
<text transform="translate(875,437) scale(0.93,1)">BLK/GRN</text>
<text transform="translate(855.5,453.5) scale(0.93,1)">S111</text>
<text transform="translate(774.8,456.7) scale(0.93,1)">G101</text>
<text transform="translate(774.8,466.7) scale(0.93,1)">(LEFT FRONT</text>
<text transform="translate(774.8,476.7) scale(0.93,1)">OF ENGINE</text>
<text transform="translate(774.8,486.7) scale(0.93,1)">COMPT)</text>
<text transform="translate(979.2,457.5) scale(0.93,1)" text-anchor="end">BRAKE FLUID </text>
<text transform="translate(979.2,467.7) scale(0.93,1)" text-anchor="end">LEVEL SWITCH</text>
<text transform="translate(979.2,477.9) scale(0.93,1)" text-anchor="end">(ON TOP OF MASTER </text>
<text transform="translate(979.2,488.1) scale(0.93,1)" text-anchor="end">CYLINDER RESERVOIR)</text>
<rect x="936" y="500" width="42.7" height="55.8" fill="#e8f6fc" stroke="#777" stroke-width="1.3" stroke-dasharray="6,4"/>
<polyline points="936.5,508.1 959.3,508.1 959.3,516.4" fill="none" stroke="#777" stroke-width="1.3" stroke-linejoin="miter"/>
<polyline points="972.2,539.2 972.2,548.2 936.5,548.2" fill="none" stroke="#777" stroke-width="1.3" stroke-linejoin="miter"/>
<line x1="959.3" y1="516.4" x2="972.2" y2="539.2" stroke="#222" stroke-width="1.1" stroke-linecap="butt"/>
<polygon points="971,537.1 966.22,532.91 969.88,530.84" fill="#000"/>
<circle cx="959.3" cy="516.4" r="1.9" fill="#000"/>
<circle cx="945.9" cy="539.2" r="1.9" fill="#000"/>
<circle cx="972.2" cy="539.2" r="1.9" fill="#000"/>
<path d="M934.4,503.5 C931,505.5 931,510.7 934.4,512.7" fill="none" stroke="#333" stroke-width="1.2"/>
<polyline points="939.8,504.5 936.2,508.1 939.8,511.7" fill="none" stroke="#333" stroke-width="1.1" stroke-linejoin="miter"/>
<path d="M934.4,543.6 C931,545.6 931,550.8 934.4,552.8" fill="none" stroke="#333" stroke-width="1.2"/>
<polyline points="939.8,544.6 936.2,548.2 939.8,551.8" fill="none" stroke="#333" stroke-width="1.1" stroke-linejoin="miter"/>
<text transform="translate(888.9,504.3) scale(0.93,1)">GRN/VIO</text>
<text transform="translate(926.5,504.5) scale(0.93,1)">5</text>
<polyline points="884.2,548.2 932,548.2" fill="none" stroke="#555555" stroke-width="1.6" stroke-linejoin="miter"/>
<circle cx="877.7" cy="548.2" r="2.5" fill="#000"/>
<line x1="871" y1="548.2" x2="829.8" y2="548.2" stroke="#444" stroke-width="1.5" stroke-linecap="butt" stroke-dasharray="8,4.9"/>
<circle cx="823.4" cy="548.2" r="2.5" fill="#000"/>
<line x1="820.6" y1="543" x2="820.6" y2="553.4" stroke="#333" stroke-width="1.1" stroke-linecap="butt"/>
<line x1="818.4" y1="545.2" x2="818.4" y2="551.2" stroke="#333" stroke-width="1.1" stroke-linecap="butt"/>
<line x1="816" y1="547.2" x2="816" y2="549.2" stroke="#333" stroke-width="1.1" stroke-linecap="butt"/>
<text transform="translate(812.4,551) scale(0.93,1)" text-anchor="end">G204</text>
<text transform="translate(839.7,545.6) scale(0.93,1)">BLK</text>
<text transform="translate(865.7,543.5) scale(0.93,1)">S501</text>
<text transform="translate(907.6,545.6) scale(0.93,1)">BLK</text>
<text transform="translate(926.5,545.5) scale(0.93,1)">6</text>
<text transform="translate(791,561.7) scale(0.93,1)" text-anchor="middle">(AT LEFT</text>
<text transform="translate(791,571.9) scale(0.93,1)" text-anchor="middle">"A" PILLAR)</text>
<text transform="translate(979.6,564.3) scale(0.93,1)" text-anchor="end">DRIVER SIDE FRONT </text>
<text transform="translate(979.6,574.65) scale(0.93,1)" text-anchor="end">DOOR LOCK UNIT</text>
<text transform="translate(979.6,585) scale(0.93,1)" text-anchor="end">(AT DOOR LOCK ASSEMBLY)</text>
<rect x="936" y="594.8" width="42.7" height="55.6" fill="#e8f6fc" stroke="#777" stroke-width="1.3" stroke-dasharray="6,4"/>
<polyline points="936.5,603.1 959.3,603.1 959.3,611.4" fill="none" stroke="#777" stroke-width="1.3" stroke-linejoin="miter"/>
<polyline points="972.2,634.2 972.2,643.2 936.5,643.2" fill="none" stroke="#777" stroke-width="1.3" stroke-linejoin="miter"/>
<line x1="959.3" y1="611.4" x2="972.2" y2="634.2" stroke="#222" stroke-width="1.1" stroke-linecap="butt"/>
<polygon points="971,632.1 966.22,627.91 969.88,625.84" fill="#000"/>
<circle cx="959.3" cy="611.4" r="1.9" fill="#000"/>
<circle cx="945.9" cy="634.2" r="1.9" fill="#000"/>
<circle cx="972.2" cy="634.2" r="1.9" fill="#000"/>
<path d="M934.4,598.5 C931,600.5 931,605.7 934.4,607.7" fill="none" stroke="#333" stroke-width="1.2"/>
<polyline points="939.8,599.5 936.2,603.1 939.8,606.7" fill="none" stroke="#333" stroke-width="1.1" stroke-linejoin="miter"/>
<path d="M934.4,638.6 C931,640.6 931,645.8 934.4,647.8" fill="none" stroke="#333" stroke-width="1.2"/>
<polyline points="939.8,639.6 936.2,643.2 939.8,646.8" fill="none" stroke="#333" stroke-width="1.1" stroke-linejoin="miter"/>
<text transform="translate(904.4,599) scale(0.93,1)">WHT</text>
<text transform="translate(926.5,599.3) scale(0.93,1)">5</text>
<polyline points="883.85,643.05 931.85,643.05" fill="none" stroke="#7a7a7a" stroke-width="1.5" stroke-linejoin="miter"/>
<g opacity="0.9">
<polyline points="884.6,643.8 932.6,643.8" fill="none" stroke="#e050e0" stroke-width="0.7" stroke-linejoin="miter"/>
</g>
<circle cx="877.7" cy="643.2" r="2.5" fill="#000"/>
<line x1="871" y1="643.2" x2="829.8" y2="643.2" stroke="#444" stroke-width="1.5" stroke-linecap="butt" stroke-dasharray="8,4.9"/>
<circle cx="823.4" cy="643.2" r="2.5" fill="#000"/>
<line x1="820.6" y1="638" x2="820.6" y2="648.4" stroke="#333" stroke-width="1.1" stroke-linecap="butt"/>
<line x1="818.4" y1="640.2" x2="818.4" y2="646.2" stroke="#333" stroke-width="1.1" stroke-linecap="butt"/>
<line x1="816" y1="642.2" x2="816" y2="644.2" stroke="#333" stroke-width="1.1" stroke-linecap="butt"/>
<text transform="translate(812.4,646) scale(0.93,1)" text-anchor="end">G304</text>
<text transform="translate(836.8,640.3) scale(0.93,1)">BLK/VIO</text>
<text transform="translate(863.5,656.3) scale(0.93,1)">S600</text>
<text transform="translate(891.6,640.3) scale(0.93,1)">BLK/VIO</text>
<text transform="translate(926.5,640.3) scale(0.93,1)">6</text>
<text transform="translate(789.5,656) scale(0.93,1)" text-anchor="middle">(AT BASE</text>
<text transform="translate(789.5,666.1) scale(0.93,1)" text-anchor="middle">OF RIGHT</text>
<text transform="translate(789.5,676.2) scale(0.93,1)" text-anchor="middle">"A" PILLAR)</text>
<text transform="translate(979.6,659.8) scale(0.93,1)" text-anchor="end">PASSENGER SIDE </text>
<text transform="translate(979.6,670) scale(0.93,1)" text-anchor="end">FRONT DOOR LOCK UNIT</text>
<text transform="translate(979.6,680.2) scale(0.93,1)" text-anchor="end">(IN FRONT PASSENGER'S DOOR)</text>
<rect x="936" y="689.6" width="42.7" height="55.8" fill="#e8f6fc" stroke="#777" stroke-width="1.3" stroke-dasharray="6,4"/>
<polyline points="936.5,697.6 959.3,697.6 959.3,705.9" fill="none" stroke="#777" stroke-width="1.3" stroke-linejoin="miter"/>
<polyline points="972.2,728.5 972.2,737.5 936.5,737.5" fill="none" stroke="#777" stroke-width="1.3" stroke-linejoin="miter"/>
<line x1="959.3" y1="705.9" x2="972.2" y2="728.5" stroke="#222" stroke-width="1.1" stroke-linecap="butt"/>
<polygon points="971,726.4 966.2,722.23 969.85,720.15" fill="#000"/>
<circle cx="959.3" cy="705.9" r="1.9" fill="#000"/>
<circle cx="945.9" cy="728.5" r="1.9" fill="#000"/>
<circle cx="972.2" cy="728.5" r="1.9" fill="#000"/>
<path d="M934.4,693 C931,695 931,700.2 934.4,702.2" fill="none" stroke="#333" stroke-width="1.2"/>
<polyline points="939.8,694 936.2,697.6 939.8,701.2" fill="none" stroke="#333" stroke-width="1.1" stroke-linejoin="miter"/>
<path d="M934.4,732.9 C931,734.9 931,740.1 934.4,742.1" fill="none" stroke="#333" stroke-width="1.2"/>
<polyline points="939.8,733.9 936.2,737.5 939.8,741.1" fill="none" stroke="#333" stroke-width="1.1" stroke-linejoin="miter"/>
<text transform="translate(908,694.7) scale(0.93,1)">YEL</text>
<text transform="translate(926.5,694.7) scale(0.93,1)">5</text>
<polyline points="856.85,737.35 931.85,737.35" fill="none" stroke="#7a7a7a" stroke-width="1.5" stroke-linejoin="miter"/>
<g opacity="0.9">
<polyline points="857.6,738.1 932.6,738.1" fill="none" stroke="#e050e0" stroke-width="0.7" stroke-linejoin="miter"/>
</g>
<circle cx="850.6" cy="737.5" r="2.5" fill="#000"/>
<line x1="844" y1="737.5" x2="789.2" y2="737.5" stroke="#444" stroke-width="1.5" stroke-linecap="butt" stroke-dasharray="8,4.9"/>
<circle cx="782.8" cy="737.5" r="2.5" fill="#000"/>
<line x1="780" y1="732.3" x2="780" y2="742.7" stroke="#333" stroke-width="1.1" stroke-linecap="butt"/>
<line x1="777.8" y1="734.5" x2="777.8" y2="740.5" stroke="#333" stroke-width="1.1" stroke-linecap="butt"/>
<line x1="775.4" y1="736.5" x2="775.4" y2="738.5" stroke="#333" stroke-width="1.1" stroke-linecap="butt"/>
<text transform="translate(771.8,740.3) scale(0.93,1)" text-anchor="end">G304</text>
<text transform="translate(804,735) scale(0.93,1)">BLK/VIO</text>
<text transform="translate(840.5,749.2) scale(0.93,1)">S304</text>
<text transform="translate(891.8,735) scale(0.93,1)">BLK/VIO</text>
<text transform="translate(926.5,735) scale(0.93,1)">6</text>
<text transform="translate(750,751.7) scale(0.93,1)" text-anchor="middle">(AT BASE</text>
<text transform="translate(750,761.7) scale(0.93,1)" text-anchor="middle">OF RIGHT</text>
<text transform="translate(750,771.7) scale(0.93,1)" text-anchor="middle">"A" PILLAR)</text>
<text transform="translate(979.4,757) scale(0.93,1)" text-anchor="end">RIGHT REAR DOOR </text>
<text transform="translate(979.4,767) scale(0.93,1)" text-anchor="end">LOCK ACTUATOR</text>
<text transform="translate(979.4,777) scale(0.93,1)" text-anchor="end">(IN RIGHT REAR DOOR)</text>
<rect x="936" y="784.7" width="42.7" height="115.3" fill="#e8f6fc" stroke="#777" stroke-width="1.3" stroke-dasharray="6,4"/>
<polyline points="936.5,792 959.3,792 959.3,800.3" fill="none" stroke="#777" stroke-width="1.3" stroke-linejoin="miter"/>
<polyline points="972.2,824.2 972.2,833.2 936.5,833.2" fill="none" stroke="#777" stroke-width="1.3" stroke-linejoin="miter"/>
<line x1="959.3" y1="800.3" x2="972.2" y2="824.2" stroke="#222" stroke-width="1.1" stroke-linecap="butt"/>
<polygon points="971,822.1 966.31,817.81 970.01,815.82" fill="#000"/>
<circle cx="959.3" cy="800.3" r="1.9" fill="#000"/>
<circle cx="945.9" cy="824.2" r="1.9" fill="#000"/>
<circle cx="972.2" cy="824.2" r="1.9" fill="#000"/>
<path d="M934.4,787.4 C931,789.4 931,794.6 934.4,796.6" fill="none" stroke="#333" stroke-width="1.2"/>
<polyline points="939.8,788.4 936.2,792 939.8,795.6" fill="none" stroke="#333" stroke-width="1.1" stroke-linejoin="miter"/>
<path d="M934.4,828.6 C931,830.6 931,835.8 934.4,837.8" fill="none" stroke="#333" stroke-width="1.2"/>
<polyline points="939.8,829.6 936.2,833.2 939.8,836.8" fill="none" stroke="#333" stroke-width="1.1" stroke-linejoin="miter"/>
<text transform="translate(908,789.5) scale(0.93,1)">YEL</text>
<text transform="translate(926.5,789.5) scale(0.93,1)">5</text>
<polyline points="856.85,833.05 931.85,833.05" fill="none" stroke="#7a7a7a" stroke-width="1.5" stroke-linejoin="miter"/>
<g opacity="0.9">
<polyline points="857.6,833.8 932.6,833.8" fill="none" stroke="#e050e0" stroke-width="0.7" stroke-linejoin="miter"/>
</g>
<polyline points="816,833.2 852,833.2" fill="none" stroke="#555555" stroke-width="1.6" stroke-linejoin="miter"/>
<path d="M854.6,828.8 Q850.2,833.2 854.6,837.6" fill="none" stroke="#333" stroke-width="1.1"/>
<path d="M858.2,828.8 Q853.8,833.2 858.2,837.6" fill="none" stroke="#333" stroke-width="1.1"/>
<circle cx="809.8" cy="833.2" r="2.5" fill="#000"/>
<line x1="803.2" y1="833.2" x2="775.6" y2="833.2" stroke="#444" stroke-width="1.5" stroke-linecap="butt" stroke-dasharray="8,4.9"/>
<circle cx="769.2" cy="833.2" r="2.5" fill="#000"/>
<line x1="766.4" y1="828" x2="766.4" y2="838.4" stroke="#333" stroke-width="1.1" stroke-linecap="butt"/>
<line x1="764.2" y1="830.2" x2="764.2" y2="836.2" stroke="#333" stroke-width="1.1" stroke-linecap="butt"/>
<line x1="761.8" y1="832.2" x2="761.8" y2="834.2" stroke="#333" stroke-width="1.1" stroke-linecap="butt"/>
<text transform="translate(758.2,836) scale(0.93,1)" text-anchor="end">G204</text>
<text transform="translate(784.4,829.4) scale(0.93,1)">BLK</text>
<text transform="translate(826.2,829.4) scale(0.93,1)">BLK</text>
<text transform="translate(891.8,829.4) scale(0.93,1)">BLK/VIO</text>
<text transform="translate(926.5,829.4) scale(0.93,1)">6</text>
<text transform="translate(795.5,848) scale(0.93,1)">S230</text>
<text transform="translate(737.5,847) scale(0.93,1)" text-anchor="middle">(AT LEFT</text>
<rect x="32" y="609.4" width="42.6" height="55.9" fill="#e8f6fc" stroke="#555" stroke-width="1.3" stroke-dasharray="7,4"/>
<polyline points="74.2,616.6 51.6,616.6 51.6,625.7 54.6,627 49.1,630 54.6,632.8 49.1,635.6 54.6,638.5 49.1,641.3 54.6,644.3 49.1,647.2 51.6,648.2 51.6,657 74.2,657" fill="none" stroke="#444" stroke-width="1.1" stroke-linejoin="miter"/>
<line x1="45.3" y1="646.5" x2="56.3" y2="629.9" stroke="#222" stroke-width="0.9" stroke-linecap="butt"/>
<polygon points="45.3,646.5 46.84,640.92 49.84,642.91" fill="#000"/>
<polyline points="71,613.2 74.6,616.6 71,620" fill="none" stroke="#333" stroke-width="1.1" stroke-linejoin="miter"/>
<path d="M76.2,612 C79.6,614 79.6,619.2 76.2,621.2" fill="none" stroke="#333" stroke-width="1.2"/>
<polyline points="71,653.6 74.6,657 71,660.4" fill="none" stroke="#333" stroke-width="1.1" stroke-linejoin="miter"/>
<path d="M76.2,652.4 C79.6,654.4 79.6,659.6 76.2,661.6" fill="none" stroke="#333" stroke-width="1.2"/>
<text transform="translate(81.5,613.6) scale(0.93,1)">1</text>
<text transform="translate(107.6,613.6) scale(0.93,1)">YEL/VIO</text>
<text transform="translate(156.7,613.6) scale(0.93,1)">VMC11</text>
<text transform="translate(81.5,653.6) scale(0.93,1)">4</text>
<text transform="translate(107.6,653.6) scale(0.93,1)">GRN/BLU</text>
<text transform="translate(156.7,653.6) scale(0.93,1)">RMC32</text>
<text transform="translate(29.3,675.3) scale(0.93,1)">FUEL PUMP MODULE</text>
<text transform="translate(29.3,685.5) scale(0.93,1)">(AT FUEL TANK ASSEMBLY)</text>
<rect x="34.7" y="695.3" width="131.8" height="200" fill="#e8f6fc" stroke="#555" stroke-width="1.2"/>
<polyline points="51.5,833 51.5,710.9 69.5,710.9" fill="none" stroke="#444" stroke-width="1.1" stroke-linejoin="miter"/>
<polyline points="69.3,710.9 70.6,708.5 73.4,713.3 76.5,708.5 79.3,713.3 82.4,708.5 85.2,713.3 88,708.5 91.1,713.3 92.8,710.9" fill="none" stroke="#444" stroke-width="1.2" stroke-linejoin="miter"/>
<polyline points="92.2,710.9 150.2,710.9 150.2,801 133.1,801" fill="none" stroke="#444" stroke-width="1.1" stroke-linejoin="miter"/>
<polyline points="51.5,742.7 69.5,742.7" fill="none" stroke="#444" stroke-width="1.1" stroke-linejoin="miter"/>
<polyline points="69.3,742.7 70.6,740.3 73.4,745.1 76.5,740.3 79.3,745.1 82.4,740.3 85.2,745.1 88,740.3 91.1,745.1 92.8,742.7" fill="none" stroke="#444" stroke-width="1.2" stroke-linejoin="miter"/>
<polyline points="92.2,742.7 110.1,742.7" fill="none" stroke="#444" stroke-width="1.1" stroke-linejoin="miter"/>
<circle cx="51.5" cy="742.7" r="2.1" fill="#000"/>
<circle cx="110.1" cy="742.7" r="2.1" fill="#000"/>
<polyline points="51.5,778.2 69.5,778.2" fill="none" stroke="#444" stroke-width="1.1" stroke-linejoin="miter"/>
<polyline points="69.3,778.2 70.6,775.8 73.4,780.6 76.5,775.8 79.3,780.6 82.4,775.8 85.2,780.6 88,775.8 91.1,780.6 92.8,778.2" fill="none" stroke="#444" stroke-width="1.2" stroke-linejoin="miter"/>
<polyline points="92.2,778.2 110.1,778.2" fill="none" stroke="#444" stroke-width="1.1" stroke-linejoin="miter"/>
<circle cx="51.5" cy="778.2" r="2.1" fill="#000"/>
<circle cx="110.1" cy="778.2" r="2.1" fill="#000"/>
<polyline points="51.5,814.3 69.5,814.3" fill="none" stroke="#444" stroke-width="1.1" stroke-linejoin="miter"/>
<polyline points="69.3,814.3 70.6,811.9 73.4,816.7 76.5,811.9 79.3,816.7 82.4,811.9 85.2,816.7 88,811.9 91.1,816.7 92.8,814.3" fill="none" stroke="#444" stroke-width="1.2" stroke-linejoin="miter"/>
<polyline points="92.2,814.3 110.1,814.3" fill="none" stroke="#444" stroke-width="1.1" stroke-linejoin="miter"/>
<circle cx="51.5" cy="814.3" r="2.1" fill="#000"/>
<circle cx="110.1" cy="814.3" r="2.1" fill="#000"/>
<line x1="110.1" y1="716" x2="133.1" y2="729.3" stroke="#444" stroke-width="1.1" stroke-linecap="butt"/>
<polygon points="111.6,716.9 116.35,717.68 114.65,720.62" fill="#000"/>
<circle cx="110.1" cy="716" r="2.1" fill="#000"/>
<circle cx="133.1" cy="729.3" r="2.1" fill="#000"/>
<line x1="110.1" y1="752" x2="133.1" y2="765.4" stroke="#444" stroke-width="1.1" stroke-linecap="butt"/>
<polygon points="111.6,752.9 116.34,753.69 114.64,756.63" fill="#000"/>
<circle cx="110.1" cy="752" r="2.1" fill="#000"/>
<circle cx="133.1" cy="765.4" r="2.1" fill="#000"/>
<line x1="110.1" y1="788.1" x2="133.1" y2="801" stroke="#444" stroke-width="1.1" stroke-linecap="butt"/>
<polygon points="111.6,789 116.36,789.71 114.7,792.68" fill="#000"/>
<circle cx="110.1" cy="788.1" r="2.1" fill="#000"/>
<circle cx="133.1" cy="801" r="2.1" fill="#000"/>
<line x1="133.1" y1="729.3" x2="150.2" y2="729.3" stroke="#444" stroke-width="1.1" stroke-linecap="butt"/>
<circle cx="150.2" cy="729.3" r="2.1" fill="#000"/>
<line x1="133.1" y1="765.4" x2="166" y2="765.4" stroke="#444" stroke-width="1.1" stroke-linecap="butt"/>
<circle cx="150.2" cy="765.4" r="2.1" fill="#000"/>
<line x1="51.5" y1="833" x2="166" y2="833" stroke="#444" stroke-width="1.1" stroke-linecap="butt"/>
<polyline points="162.5,761.8 166.3,765.4 162.5,769" fill="none" stroke="#333" stroke-width="1.1" stroke-linejoin="miter"/>
<path d="M170.8,760.8 C174.2,762.8 174.2,768 170.8,770" fill="none" stroke="#333" stroke-width="1.2"/>
<polyline points="162.5,829.4 166.3,833 162.5,836.6" fill="none" stroke="#333" stroke-width="1.1" stroke-linejoin="miter"/>
<path d="M170.8,828.4 C174.2,830.4 174.2,835.6 170.8,837.6" fill="none" stroke="#333" stroke-width="1.2"/>
<text transform="translate(176,761.4) scale(0.93,1)">3</text>
<text transform="translate(189.8,761.4) scale(0.93,1)">GRN/VIO</text>
<text transform="translate(176,828.6) scale(0.93,1)">2</text>
<text transform="translate(189.8,828.6) scale(0.93,1)">WHT/BRN</text>
<circle cx="81.5" cy="848" r="11" fill="none" stroke="#444" stroke-width="1.1"/>
</svg></body></html>
